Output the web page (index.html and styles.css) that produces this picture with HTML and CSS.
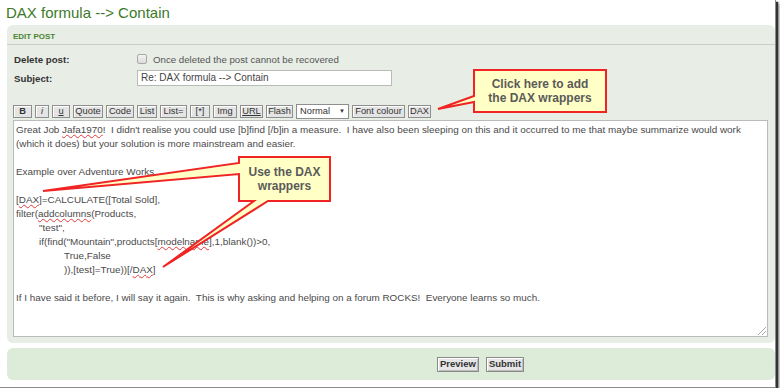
FILE: index.html
```html
<!DOCTYPE html>
<html lang="en">
  <head>
    <meta charset="UTF-8" />
    <title>DAX formula --&gt; Contain</title>
    <link rel="stylesheet" href="styles.css">
  </head>

  <body>
    <div class="frame">
      <h1 class="topic-title">DAX formula --&gt; Contain</h1>

      <form class="panel edit-panel">
        <h3 class="panel-head">EDIT POST</h3>

        <div class="row">
          <span class="row-label">Delete post:</span>
          <label class="check"><span class="check-box"></span>Once deleted the post cannot be recovered</label>
        </div>

        <div class="row">
          <span class="row-label">Subject:</span>
          <div class="subject">Re: DAX formula --&gt; Contain</div>
        </div>

        <div class="toolbar">
          <span class="tb-btn tb-b">B</span>
          <span class="tb-btn tb-i">i</span>
          <span class="tb-btn tb-u">u</span>
          <span class="tb-btn w30">Quote</span>
          <span class="tb-btn w28">Code</span>
          <span class="tb-btn w20">List</span>
          <span class="tb-btn w27">List=</span>
          <span class="tb-btn w20">[*]</span>
          <span class="tb-btn w24">Img</span>
          <span class="tb-btn tb-url w23">URL</span>
          <span class="tb-btn w27">Flash</span>
          <span class="tb-select">Normal <span class="tb-arrow">&#9660;</span></span>
          <span class="tb-btn w53">Font colour</span>
          <span class="tb-btn w23">DAX</span>
        </div>

        <div class="message">
          <div class="line">Great Job <span class="typo">Jafa1970</span>!  I didn't realise you could use [b]find [/b]in a measure.  I have also been sleeping on this and it occurred to me that maybe summarize would work</div>
          <div class="line">(which it does) but your solution is more mainstream and easier.</div>
          <div class="line"></div>
          <div class="line">Example over Adventure Works</div>
          <div class="line"></div>
          <div class="line">[<span class="typo">DAX</span>]=CALCULATE([Total Sold],</div>
          <div class="line">filter(<span class="typo">addcolumns</span>(Products,</div>
          <div class="line indent-1">"test",</div>
          <div class="line indent-1">if(find("Mountain",products[<span class="typo">modelname</span>],1,blank())&gt;0,</div>
          <div class="line indent-2">True,False</div>
          <div class="line indent-2">)),[test]=True))[/<span class="typo">DAX</span>]</div>
          <div class="line"></div>
          <div class="line">If I have said it before, I will say it again.  This is why asking and helping on a forum ROCKS!  Everyone learns so much.</div>
          <span class="grip"></span>
        </div>
      </form>

      <div class="panel submit-panel">
        <span class="form-btn">Preview</span>
        <span class="form-btn">Submit</span>
      </div>

      <svg class="callouts" width="780" height="392" viewBox="0 0 780 392">
        <path d="M474 70 H606 V112 H474 V102 L438 109 L474 96 Z" />
        <path d="M239 157 H330 V201 H268 L163 267 L254 201 H239 V174 L43 191 L239 163 Z" />
      </svg>
      <div class="note note-toolbar">Click here to add<br>the DAX wrappers</div>
      <div class="note note-code">Use the DAX<br>wrappers</div>
    </div>
  </body>
</html>
```

FILE: styles.css
```css
html {
  box-sizing: border-box;
  font-family: "Liberation Sans", Arial, sans-serif;
}
*,
*:before,
*:after {
  box-sizing: inherit;
}

body {
  margin: 0;
  padding: 0;
  background: #fff;
}

.frame {
  position: relative;
  width: 776px;
  height: 388px;
  background: #fff;
  border-right: 1px solid #8a8a8a;
  border-bottom: 1px solid #8a8a8a;
  box-shadow: 2px 2px 1px #333, 3px 3px 3px #777;
}

.topic-title {
  margin: 0;
  padding: 3px 0 0 6px;
  height: 25px;
  font-size: 15px;
  font-weight: normal;
  line-height: 20px;
  color: #3c7a2a;
}

.panel {
  margin-left: 7px;
  border-radius: 6px;
}

.edit-panel {
  height: 318px;
  background: #e8ede6;
}

.panel-head {
  margin: 0;
  height: 20px;
  padding: 7px 0 0 6px;
  font-size: 8px;
  line-height: 10px;
  font-weight: bold;
  color: #4b8630;
  border-bottom: 1px solid #c9cec6;
}

.row {
  display: flex;
  align-items: center;
  height: 16px;
  padding-left: 7px;
  margin-top: 3px;
  font-size: 9.7px;
}

.row:first-of-type {
  margin-top: 6px;
}

.row-label {
  width: 123px;
  font-weight: bold;
  color: #333;
}

.check {
  display: flex;
  align-items: center;
  gap: 6px;
  color: #555;
}

.check-box {
  width: 10px;
  height: 10px;
  border: 1px solid #a9a9a9;
  border-radius: 2px;
  background: linear-gradient(#f4f4f4, #dcdcdc);
}

.subject {
  width: 255px;
  height: 16px;
  padding: 0 3px;
  font-size: 10px;
  line-height: 14px;
  border: 1px solid #b8bbb6;
  background: #fff;
  color: #444;
}

.toolbar {
  display: flex;
  gap: 3px;
  margin: 19px 0 2px 6px;
  height: 13px;
}

.tb-btn {
  height: 13px;
  padding: 0;
  font-size: 9.3px;
  line-height: 11px;
  color: #333;
  background: #e4e4e4;
  border: 1px solid #8e8e8e;
  box-shadow: inset 1px 1px #fff;
  text-align: center;
  white-space: nowrap;
}

.tb-b {
  width: 19px;
  font-weight: bold;
}

.tb-i {
  width: 14px;
  font-style: italic;
}

.tb-u {
  width: 18px;
  text-decoration: underline;
}

.tb-url {
  text-decoration: underline;
}

.w20 { width: 20px; }
.w23 { width: 23px; }
.w24 { width: 24px; }
.w27 { width: 27px; }
.w28 { width: 28px; }
.w30 { width: 30px; }
.w53 { width: 53px; }

.tb-select {
  display: flex;
  justify-content: space-between;
  width: 53px;
  height: 15px;
  margin-top: -1px;
  padding: 0 3px;
  font-size: 9.3px;
  line-height: 13px;
  color: #333;
  background: #fff;
  border: 1px solid #8e8e8e;
}

.tb-arrow {
  font-size: 6px;
}

.message {
  position: relative;
  height: 217px;
  margin: 0 7px 0 6px;
  padding: 2px 2px;
  background: #fff;
  border: 1px solid #b9bcb8;
  font-size: 9.9px;
  line-height: 14px;
  color: #4a4a4a;
}

.line {
  height: 14px;
  white-space: pre;
}

.indent-1 {
  padding-left: 23px;
}

.indent-2 {
  padding-left: 48px;
}

.typo {
  text-decoration: underline wavy #e23a3a;
  text-decoration-thickness: 1px;
}

.grip {
  position: absolute;
  right: 1px;
  bottom: 1px;
  width: 8px;
  height: 8px;
  background: linear-gradient(135deg, transparent 45%, #aaa 45%, #aaa 55%, transparent 55%, transparent 70%, #aaa 70%, #aaa 80%, transparent 80%);
}

.submit-panel {
  display: flex;
  gap: 7px;
  height: 32px;
  margin-top: 5px;
  padding: 9px 0 0 430px;
  background: #ddecd9;
}

.form-btn {
  height: 15px;
  padding: 0 2px;
  font-size: 9.5px;
  line-height: 12px;
  font-weight: bold;
  color: #333;
  background: #e6e6e6;
  border: 1px solid #8a8a8a;
  box-shadow: inset 1px 1px #fff, inset -1px -1px #bbb;
}

.callouts {
  position: absolute;
  left: 0;
  top: 0;
  pointer-events: none;
}

.callouts path {
  fill: #ffffc6;
  stroke: #f02424;
  stroke-width: 2;
  stroke-linejoin: miter;
}

.note {
  position: absolute;
  display: flex;
  align-items: center;
  justify-content: center;
  text-align: center;
  font-size: 12px;
  line-height: 14px;
  font-weight: bold;
  color: #5a5a5a;
}

.note-toolbar {
  left: 474px;
  top: 70px;
  width: 132px;
  height: 42px;
}

.note-code {
  left: 239px;
  top: 157px;
  width: 91px;
  height: 44px;
}
```
